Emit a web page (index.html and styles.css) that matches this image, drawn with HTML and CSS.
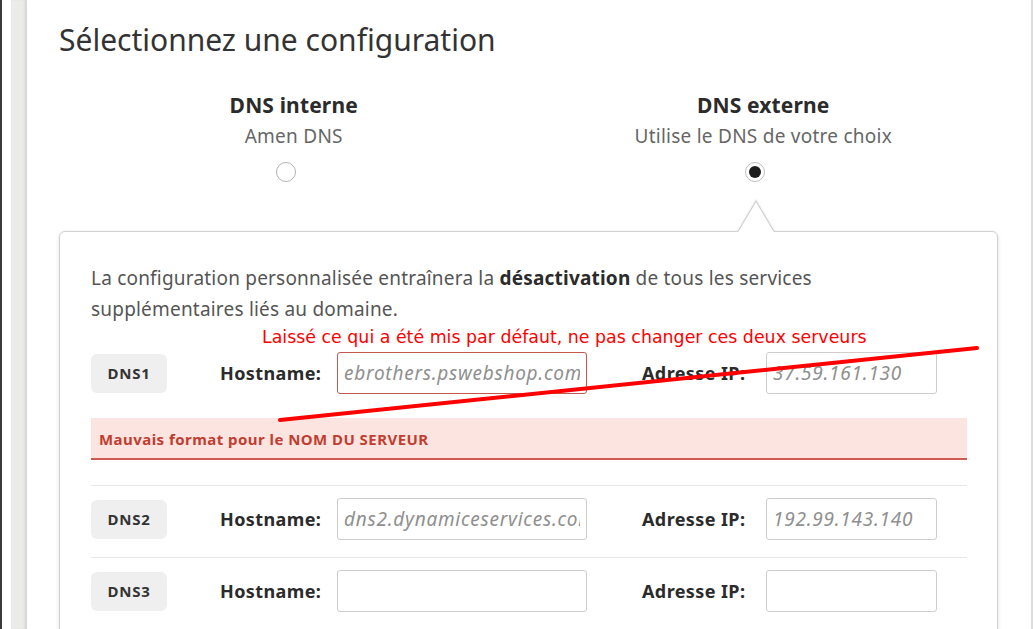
FILE: index.html
```html
<!DOCTYPE html>
<html lang="fr">
<head>
<meta charset="utf-8">
<title>Sélectionnez une configuration</title>
<link rel="stylesheet" href="styles.css">
</head>
<body>
<div class="frame">
  <div class="edge"></div>
  <div class="gutter"></div>
  <div class="rail"></div>
  <main class="panel">
    <h1 class="title">Sélectionnez une configuration</h1>
    <div class="options">
      <div class="option">
        <span class="opt-title">DNS interne</span>
        <span class="opt-sub">Amen DNS</span>
        <span class="radio"></span>
      </div>
      <div class="option">
        <span class="opt-title">DNS externe</span>
        <span class="opt-sub">Utilise le DNS de votre choix</span>
        <span class="radio checked"></span>
      </div>
    </div>
    <section class="card">
      <svg class="card-arrow" width="38" height="33" viewBox="0 0 38 33">
        <polygon points="0,33 19,0 38,33" fill="#fff"/>
        <polyline points="1,31.5 19,1 37,31.5" fill="none" stroke="#cfcfcf" stroke-width="1.2"/>
      </svg>
      <p class="notice">La configuration personnalisée entraînera la <strong>désactivation</strong> de tous les services supplémentaires liés au domaine.</p>
      <div class="server first">
        <div class="server-row">
          <span class="badge">DNS1</span>
          <span class="label">Hostname:</span>
          <input class="field host invalid" type="text" placeholder="ebrothers.pswebshop.com">
          <span class="label ip">Adresse IP:</span>
          <input class="field addr" type="text" placeholder="37.59.161.130">
        </div>
        <div class="error">Mauvais format pour le NOM DU SERVEUR</div>
      </div>
      <div class="server">
        <div class="server-row">
          <span class="badge">DNS2</span>
          <span class="label">Hostname:</span>
          <input class="field host" type="text" placeholder="dns2.dynamiceservices.com">
          <span class="label ip">Adresse IP:</span>
          <input class="field addr" type="text" placeholder="192.99.143.140">
        </div>
      </div>
      <div class="server">
        <div class="server-row">
          <span class="badge">DNS3</span>
          <span class="label">Hostname:</span>
          <input class="field host" type="text">
          <span class="label ip">Adresse IP:</span>
          <input class="field addr" type="text">
        </div>
      </div>
    </section>
  </main>
</div>
<div class="annotations">
  <p class="note">Laissé ce qui a été mis par défaut, ne pas changer ces deux serveurs</p>
  <svg class="strike" width="1033" height="629" viewBox="0 0 1033 629">
    <line x1="280" y1="420" x2="977" y2="348" stroke="#ff0000" stroke-width="4" stroke-linecap="round"/>
  </svg>
</div>
</body>
</html>
```

FILE: styles.css
```css
* { box-sizing: border-box; }

html, body {
  margin: 0;
  padding: 0;
  height: 629px;
  overflow: hidden;
  background: #fff;
}

body {
  position: relative;
  font-family: "Noto Sans", "Open Sans", sans-serif;
  color: #333;
}

.frame {
  display: flex;
  height: 629px;
}

.edge {
  width: 2px;
  background: #3a3a3a;
  flex: none;
}

.gutter {
  width: 9px;
  background: #fff;
  flex: none;
}

.rail {
  width: 16px;
  background: #ebecea;
  box-shadow: inset -3px 0 3px -1px rgba(0, 0, 0, 0.10);
  flex: none;
}

.panel {
  flex: 1;
  border-right: 2px solid #dcdcdc;
  padding-left: 32px;
  background: #fff;
}

.title {
  margin: 22px 0 0;
  font-size: 30px;
  line-height: 36px;
  font-weight: 400;
  color: #333;
}

.options {
  display: grid;
  grid-template-columns: 1fr 1fr;
  width: 939px;
  margin: 34px 0 0 0;
}

.option {
  display: flex;
  flex-direction: column;
  align-items: center;
}

.opt-title {
  font-size: 21px;
  line-height: 26px;
  font-weight: 700;
  letter-spacing: 0.15px;
  color: #2b2b2b;
}

.opt-sub {
  margin-top: 5px;
  font-size: 19px;
  line-height: 26px;
  letter-spacing: 0.25px;
  color: #666;
}

.radio {
  margin: 13px 16px 0 0;
  width: 20px;
  height: 20px;
  border-radius: 50%;
  border: 1px solid #b3b3b3;
  background: #fff;
  display: flex;
  align-items: center;
  justify-content: center;
}

.radio.checked {
  border: 1.5px solid #bdbdbd;
}

.radio.checked::after {
  content: "";
  width: 12px;
  height: 12px;
  border-radius: 50%;
  background: #1c1c1c;
}

.card {
  position: relative;
  margin: 49px 33px 0 0;
  border: 1px solid #d2d2d2;
  border-radius: 6px;
  box-shadow: 0 1px 4px rgba(0, 0, 0, 0.12);
  padding: 31px 30px 40px 31px;
  background: #fff;
}

.card-arrow {
  position: absolute;
  top: -32px;
  left: 677px;
  filter: drop-shadow(0 -1px 1px rgba(0, 0, 0, 0.06));
}

.notice {
  margin: 0 0 27px;
  max-width: 830px;
  font-size: 19px;
  line-height: 31px;
  letter-spacing: 0.2px;
  color: #555;
}

.notice strong {
  font-weight: 700;
  color: #2b2b2b;
}

.server {
  padding: 12px 0 17px;
  border-top: 1px solid #e7e7e7;
}

.server.first {
  padding: 0 0 25px;
  border-top: none;
}

.server-row {
  display: flex;
  align-items: center;
  height: 42px;
}

.badge {
  flex: none;
  width: 76px;
  height: 39px;
  border-radius: 6px;
  background: #efefef;
  display: flex;
  align-items: center;
  justify-content: center;
  font-size: 15px;
  font-weight: 700;
  letter-spacing: 0.8px;
  color: #333;
}

.label {
  flex: none;
  margin-left: 53px;
  width: 117px;
  font-size: 18px;
  font-weight: 700;
  letter-spacing: 0.4px;
  color: #2b2b2b;
}

.label.ip {
  margin-left: 55px;
  width: 124px;
}

.field {
  flex: none;
  height: 42px;
  border: 1px solid #cdcdcd;
  border-radius: 3px;
  background: #fff;
  padding: 0 6px;
  font-family: "Noto Sans", "Open Sans", sans-serif;
  font-size: 19px;
  font-style: italic;
  color: #555;
  outline: none;
}

.field::placeholder {
  color: #8f8f8f;
  font-style: italic;
  letter-spacing: 0.75px;
}

.field.host { width: 250px; }
.field.addr { width: 171px; }

.field.invalid {
  border-color: #c4584c;
}

.error {
  margin-top: 24px;
  height: 42px;
  padding: 3px 0 0 8px;
  background: #fce4e0;
  border-bottom: 2px solid #d05a4f;
  font-size: 15px;
  line-height: 37px;
  font-weight: 700;
  letter-spacing: 0.45px;
  color: #c23d30;
}

.annotations {
  position: absolute;
  inset: 0;
  pointer-events: none;
}

.note {
  position: absolute;
  left: 262px;
  top: 327px;
  margin: 0;
  font-family: "DejaVu Sans", sans-serif;
  font-size: 17.4px;
  line-height: 20px;
  color: #ff0000;
  white-space: nowrap;
}

.strike {
  position: absolute;
  left: 0;
  top: 0;
}
```
